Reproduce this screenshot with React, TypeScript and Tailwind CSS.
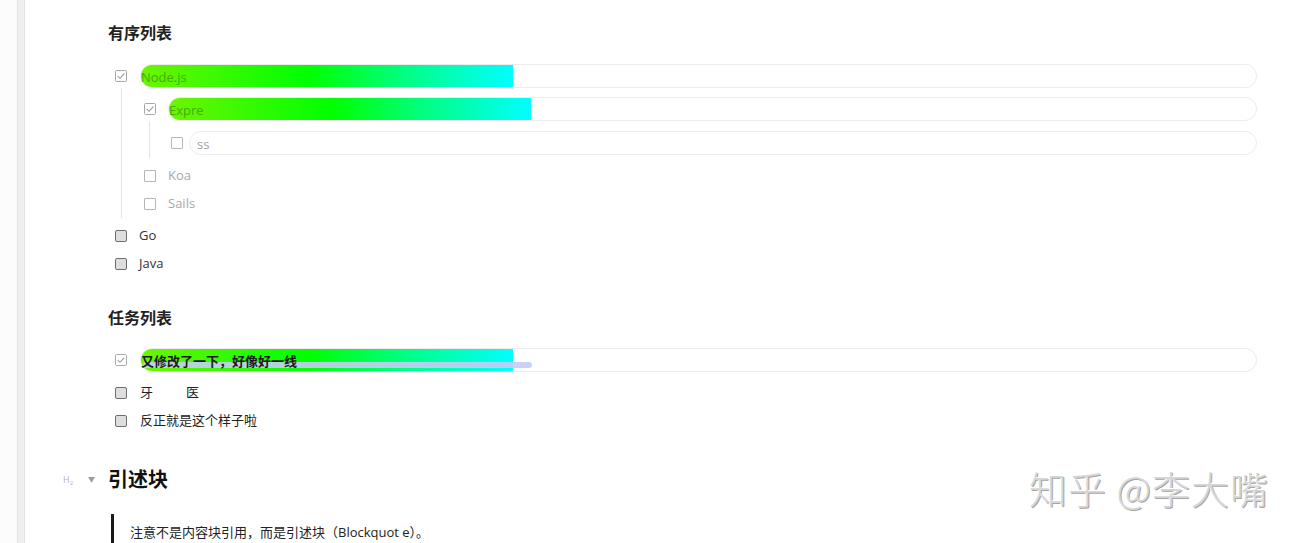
import React from "react";

const font = {
  fontFamily: '"Open Sans", "Noto Sans CJK SC", sans-serif',
};

function CheckedBox() {
  return (
    <svg width="12" height="12" viewBox="0 0 12 12" className="block">
      <rect x="0.5" y="0.5" width="11" height="11" rx="1" fill="#fff" stroke="#a8a8a8" />
      <path d="M2.8 6.2 L5 8.3 L9.3 3.6" fill="none" stroke="#9a9a9a" strokeWidth="1.1" />
    </svg>
  );
}

function LightBox() {
  return <div className="w-[12px] h-[12px] border border-[#b5b5b5] bg-white rounded-[1px]" />;
}

function DarkBox() {
  return <div className="w-[12px] h-[12px] border border-[#6e6e6e] bg-[#dedede] rounded-[2px]" />;
}

function Pill({
  children,
  bar,
  blue,
  offset = 0,
}: {
  children: React.ReactNode;
  bar?: number;
  blue?: number;
  offset?: number;
}) {
  return (
    <div
      className="relative flex-1 h-[24px] rounded-full border border-[#ececec] flex items-center"
      style={{ marginLeft: -offset }}
    >
      {bar ? (
        <div
          className="absolute left-0 top-0 bottom-0 rounded-l-full bg-[linear-gradient(to_right,#6cf500,#00ff00_45%,#00ff7f_70%,#00ffff)]"
          style={{ width: bar }}
        />
      ) : null}
      {blue ? (
        <div
          className="absolute left-[2px] top-[13px] h-[6px] rounded-full bg-[#c3cdf5] opacity-90"
          style={{ width: blue }}
        />
      ) : null}
      <div className="relative" style={{ paddingLeft: offset }}>
        {children}
      </div>
    </div>
  );
}

export default function App() {
  return (
    <div className="relative w-[1307px] h-[543px] overflow-hidden bg-white flex" style={font}>
      <div className="w-[17px] h-full bg-[#fcfcfc]" />
      <div className="w-[8px] h-full bg-[#efefef] border-x border-[#e2e2e2]" />
      <div className="flex-1 pl-[83px] pr-[50px] flex flex-col">
        {/* 有序列表 */}
        <div className="mt-[21px] h-[24px] flex items-center text-[16px] font-bold text-[#222]">有序列表</div>

        <div className="ml-[7px] mt-[19px] flex flex-col">
          {/* Node.js */}
          <div className="flex items-center h-[24px]">
            <div className="w-[25px] flex items-center"><CheckedBox /></div>
            <Pill bar={372}>
              <span className="text-[13px] text-[#44ad00]">Node.js</span>
            </Pill>
          </div>
          <div className="ml-[6px] border-l border-[#e3e3e3] pl-[22px] flex flex-col pb-[0px]">
            <div className="mt-[9px] flex items-center h-[24px]">
              <div className="w-[24px] flex items-center"><CheckedBox /></div>
              <Pill bar={362}>
                <span className="text-[13px] text-[#44ad00]">Expre</span>
              </Pill>
            </div>
            <div className="ml-[5px] border-l border-[#e3e3e3] pl-[21px] pt-[10px] pb-[3px]">
              <div className="flex items-center h-[24px]">
                <div className="w-[25px] flex items-center"><LightBox /></div>
                <Pill offset={7}>
                  <span className="text-[13px] text-[#a0a0a0]">ss</span>
                </Pill>
              </div>
            </div>
            <div className="mt-[4px] flex items-center h-[28px]">
              <div className="w-[24px] flex items-center"><LightBox /></div>
              <span className="text-[13px] text-[#a8a8a8]">Koa</span>
            </div>
            <div className="flex items-center h-[28px]">
              <div className="w-[24px] flex items-center"><LightBox /></div>
              <span className="text-[13px] text-[#a8a8a8]">Sails</span>
            </div>
          </div>
          <div className="mt-[4px] flex items-center h-[28px]">
            <div className="w-[24px] flex items-center"><DarkBox /></div>
            <span className="text-[13px] text-[#333]">Go</span>
          </div>
          <div className="flex items-center h-[28px]">
            <div className="w-[24px] flex items-center"><DarkBox /></div>
            <span className="text-[13px] text-[#333]">Java</span>
          </div>
        </div>

        {/* 任务列表 */}
        <div className="mt-[28px] h-[24px] flex items-center text-[16px] font-bold text-[#222]">任务列表</div>

        <div className="ml-[7px] mt-[18px] flex flex-col">
          <div className="flex items-center h-[24px]">
            <div className="w-[25px] flex items-center"><CheckedBox /></div>
            <Pill bar={372} blue={389}>
              <span className="text-[13px] font-semibold text-[#1a1a1a]">又修改了一下，好像好一线</span>
            </Pill>
          </div>
          <div className="mt-[7px] flex items-center h-[28px]">
            <div className="w-[25px] flex items-center"><DarkBox /></div>
            <span className="text-[13px] text-[#222] flex items-center">
              <span>牙</span>
              <span className="inline-block w-[33px]" />
              <span>医</span>
            </span>
          </div>
          <div className="flex items-center h-[28px]">
            <div className="w-[25px] flex items-center"><DarkBox /></div>
            <span className="text-[13px] text-[#222]">反正就是这个样子啦</span>
          </div>
        </div>

        {/* 引述块 */}
        <div className="mt-[30px] h-[32px] flex items-center relative">
          <span className="absolute left-[-45px] text-[9px] text-[#b5b5b5]">
            H<sub className="text-[6px]">2</sub>
          </span>
          <span className="absolute left-[-20px] text-[7px] text-[#999]">▼</span>
          <span className="text-[20px] font-bold text-[#111]">引述块</span>
        </div>

        <div className="mt-[19px] ml-[3px] border-l-[3px] border-[#1a1a1a] pl-[16px] h-[40px] pt-[5px]">
          <span className="text-[13px] text-[#222]">注意不是内容块引用，而是引述块（Blockquot e）。</span>
        </div>
      </div>

      <div
        className="absolute left-[1029px] top-[465px] text-[38px] leading-[46px] tracking-[1px] font-light text-[#d6d6d6] whitespace-pre [text-shadow:-1px_-1px_0_#ffffff,1px_1px_0_#a5a5a5]"
        style={{ fontFamily: '"Noto Sans CJK SC", sans-serif' }}
      >
        知乎 @李大嘴
      </div>
    </div>
  );
}
